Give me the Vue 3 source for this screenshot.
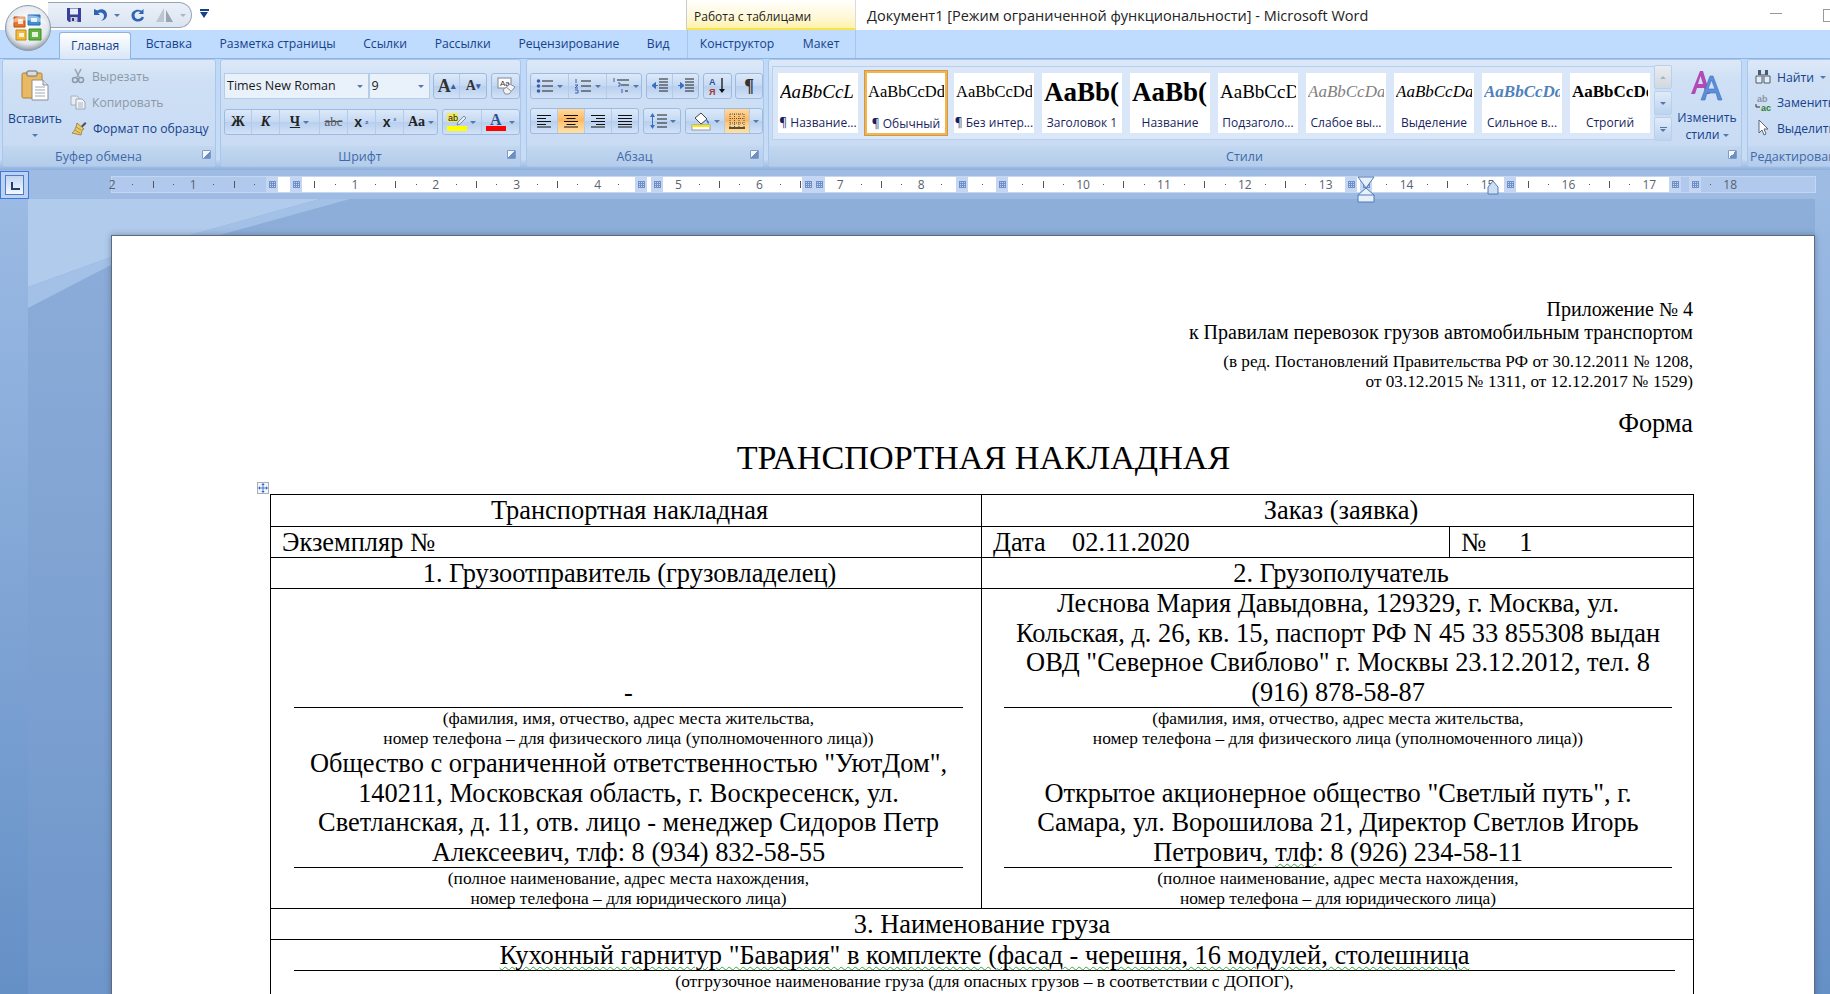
<template>
  <div class="okno">
    <!-- заголовок окна -->
    <div class="zagolovok">
      <div class="qat">
        <svg class="qat-ico" width="16" height="16" viewBox="0 0 16 16"><path d="M1 1h14v14H3l-2-2z" fill="#3a3f9e"/><rect x="4" y="1.500" width="8" height="6" fill="#e8edf7"/><rect x="4.500" y="10" width="7" height="5" fill="#c9ccd8"/><rect x="6" y="11" width="2" height="3" fill="#34386f"/></svg>
        <svg class="qat-ico undo" width="15" height="16" viewBox="0 0 15 16"><path d="M1 2v6h6L5 6c3-1.500 6 0 6 3 0 2-1 3.500-3 5 4-1 6-3 6-6 0-5-5-7.500-9.500-4.500z" fill="#2f64b5"/></svg>
        <span class="strelka s-qat"></span>
        <svg class="qat-ico redo" width="16" height="16" viewBox="0 0 16 16"><path d="M13.500 2v5h-5l2-2c-2.500-1.500-6 0-6 3.200 0 2 1.500 3.800 3.500 3.800s3.200-1 3.800-2.500l2.200 1c-.8 2.500-3 4-6 4C4 14.500 1.500 12 1.500 8.200 1.500 3.500 7.500 1 11.500 3.800z" fill="#2f64b5"/></svg>
        <svg class="qat-ico seryj" width="19" height="16" viewBox="0 0 19 16"><path d="M9 1v14H1z" fill="#bcc6d0"/><path d="M11 3l7 12h-7z" fill="#98a4b2"/></svg>
        <span class="strelka s-qat seraya"></span>
      </div>
      <div class="nastroit"><span></span></div>
      <div class="rabota">Работа с таблицами</div>
      <div class="nazvanie">Документ1 [Режим ограниченной функциональности] - Microsoft Word</div>
      <div class="knopki-okna"><span class="svernut"></span><span class="razvernut"></span></div>
    </div>

    <div class="orb">
      <svg width="46" height="46" viewBox="0 0 46 46">
        <defs>
          <radialGradient id="orbFon" cx="50%" cy="40%" r="60%">
            <stop offset="0" stop-color="#ffffff"/>
            <stop offset="0.75" stop-color="#e3e8ee"/>
            <stop offset="1" stop-color="#8f9aa6"/>
          </radialGradient>
        </defs>
        <circle cx="23" cy="23" r="22.500" fill="url(#orbFon)" stroke="#8d99a6"/>
        <path d="M9 12h11v10H9z" fill="#e8742c" stroke="#b34f12"/>
        <path d="M13 14h5v5h-5z" fill="#f8e3d2"/>
        <path d="M23 10h12v10H23z" fill="#3d8fd6" stroke="#246bb0"/>
        <path d="M26 13h6v4h-6z" fill="#dcebf7"/>
        <path d="M11 25h10v10H11z" fill="#f4b83a" stroke="#c48a14"/>
        <path d="M14 28h5v4h-5z" fill="#fff3d4"/>
        <path d="M24 24h12v11H24z" fill="#63b043" stroke="#3f8a24"/>
        <path d="M27 27h6v5h-6z" fill="#e4f2da"/>
        <path d="M4 20C8 7 38 7 42 20 34 14 12 14 4 20z" fill="#ffffff" opacity=".45"/>
      </svg>
    </div>

    <!-- вкладки -->
    <div class="vkladki">
      <div v-for="t in vkladki" :key="t" class="vkladka" :class="{ aktivnaya: t === 'Главная' }">{{ t }}</div>
      <div class="kontekst">
        <div class="vkladka">Конструктор</div>
        <div class="vkladka">Макет</div>
      </div>
    </div>

    <!-- лента -->
    <div class="lenta">
      <section class="gruppa g-bufer">
        <div class="telo stroka-telo">
          <div class="vstavit">
            <svg width="28" height="31" viewBox="0 0 28 31">
              <rect x="1" y="3" width="20" height="25" rx="1.500" fill="#e9b964" stroke="#a97f38"/>
              <rect x="6" y="1" width="10" height="5" rx="1" fill="#d8dde4" stroke="#75716a"/>
              <path d="M11 10h11l5 5v15H11z" fill="#fff" stroke="#8a8d96"/>
              <path d="M22 10v5h5" fill="#dbe2ec" stroke="#8a8d96"/>
              <path d="M14 17h10M14 20h10M14 23h10M14 26h10" stroke="#9fa7b5"/>
            </svg>
            <span class="tekst">Вставить</span>
            <span class="strelka"></span>
          </div>
          <div class="kolonka">
            <div class="malaya seryj-tekst">
              <svg width="16" height="16" viewBox="0 0 16 16"><path d="M5 1l4 8M11 1L7 9" stroke="#9aa6b5" stroke-width="1.600" fill="none"/><circle cx="5" cy="12" r="2.500" fill="none" stroke="#8d99a8" stroke-width="1.500"/><circle cx="11" cy="12" r="2.500" fill="none" stroke="#8d99a8" stroke-width="1.500"/></svg>
              Вырезать
            </div>
            <div class="malaya seryj-tekst">
              <svg width="16" height="16" viewBox="0 0 16 16"><path d="M1 2h6l2 2v7H1z" fill="#e8edf3" stroke="#a6b0bd"/><path d="M6 5h6l3 3v7H6z" fill="#f2f5f9" stroke="#99a4b3"/><path d="M8 9h5M8 11h5M8 13h5" stroke="#aab3c0"/></svg>
              Копировать
            </div>
            <div class="malaya">
              <svg width="17" height="16" viewBox="0 0 17 16"><path d="M11 6l4-4 1.500 1.500-4 4z" fill="#55504a"/><path d="M7 3l7 6-2 1-1 5-9-2C4 12 6 8 7 3z" fill="#e9c96a" stroke="#93772c" stroke-width=".8"/><path d="M6 7l5 3M5 10l5 3" stroke="#b3933c"/></svg>
              Формат по образцу
            </div>
          </div>
        </div>
        <div class="podpis">Буфер обмена<i class="raskryt"></i></div>
      </section>

      <section class="gruppa g-shrift">
        <div class="telo">
          <div class="ryad">
            <div class="pole p-shrift">Times New Roman<span class="strelka"></span></div>
            <div class="pole p-razmer">9<span class="strelka"></span></div>
            <div class="nabor ml3">
              <div class="kn w26 bukva-a">A<sup>▴</sup></div>
              <div class="kn w26 bukva-a mensh">A<sup>▾</sup></div>
            </div>
            <div class="nabor ml4">
              <div class="kn w27">
                <svg width="20" height="18" viewBox="0 0 20 18"><rect x="2" y="1" width="13" height="10" fill="#fff" stroke="#7f8896"/><text x="4" y="9" font-size="8" font-family="Liberation Sans, sans-serif" fill="#333">Aa</text><path d="M7 13l7-6 5 3-6 7H9z" fill="#f3f3f6" stroke="#8b8f99"/><path d="M10 10l5 4" stroke="#8b8f99"/></svg>
              </div>
            </div>
          </div>
          <div class="ryad">
            <div class="nabor">
              <div class="kn w27 ser">Ж</div>
              <div class="kn w28 ser kursiv">К</div>
              <div class="kn w40 ser"><u>Ч</u><span class="strelka"></span></div>
              <div class="kn w28 ser zachyork">abc</div>
              <div class="kn w28 ser indeks">x<sub>₂</sub></div>
              <div class="kn w28 ser indeks">x<sup>²</sup></div>
              <div class="kn w34 ser registr">Aa<span class="strelka"></span></div>
            </div>
            <div class="nabor ml4">
              <div class="kn w39">
                <svg width="20" height="20" viewBox="0 0 20 20"><rect x="0" y="1" width="11" height="9" fill="#f3e85a"/><text x="1" y="9" font-size="9" font-family="Liberation Sans, sans-serif" fill="#222">ab</text><path d="M11 10l6-6 2 2-6 6-3 1z" fill="#e8edf4" stroke="#7f8896"/><rect x="0" y="14" width="20" height="5" fill="#ffff00"/></svg>
                <span class="strelka"></span>
              </div>
              <div class="kn w38">
                <svg width="20" height="20" viewBox="0 0 20 20"><text x="4" y="13" font-size="16" font-weight="bold" font-family="Liberation Serif, serif" fill="#2f4f8e">A</text><rect x="0" y="14" width="20" height="5" fill="#ff0000"/></svg>
                <span class="strelka"></span>
              </div>
            </div>
          </div>
        </div>
        <div class="podpis">Шрифт<i class="raskryt"></i></div>
      </section>

      <section class="gruppa g-abzac">
        <div class="telo">
          <div class="ryad">
            <div class="nabor">
              <div class="kn w38">
                <svg width="18" height="16" viewBox="0 0 18 16"><path d="M6 3h11M6 8h11M6 13h11" stroke="#222" stroke-width="1.200"/><circle cx="2.500" cy="3" r="1.800" fill="#3a5fa8"/><circle cx="2.500" cy="8" r="1.800" fill="#3a5fa8"/><circle cx="2.500" cy="13" r="1.800" fill="#3a5fa8"/></svg>
                <span class="strelka"></span>
              </div>
              <div class="kn w38">
                <svg width="18" height="16" viewBox="0 0 18 16"><path d="M7 3h10M7 8h10M7 13h10" stroke="#222" stroke-width="1.200"/><path d="M2 1v4M1 7h3L1 10h3M1 12h3v3H1" stroke="#3a5fa8" fill="none"/></svg>
                <span class="strelka"></span>
              </div>
              <div class="kn w37">
                <svg width="18" height="16" viewBox="0 0 18 16"><path d="M5 2h12M9 7h8M13 13h3" stroke="#222" stroke-width="1.200"/><path d="M2 0v4M6 5h2v3H6M10 11v4" stroke="#3a5fa8" fill="none"/></svg>
                <span class="strelka"></span>
              </div>
            </div>
            <div class="nabor ml4">
              <div class="kn w26">
                <svg width="18" height="16" viewBox="0 0 18 16"><path d="M8 1h9M8 4h9M8 7h9M8 10h9M8 13h9" stroke="#222"/><path d="M7 7.500H3M1 7.500l3.500-3v6z" fill="#3a6fc0" stroke="#3a6fc0"/></svg>
              </div>
              <div class="kn w26">
                <svg width="18" height="16" viewBox="0 0 18 16"><path d="M8 1h9M8 4h9M8 7h9M8 10h9M8 13h9" stroke="#222"/><path d="M1 7.500h4M7 7.500l-3.500-3v6z" fill="#3a6fc0" stroke="#3a6fc0"/></svg>
              </div>
            </div>
            <div class="nabor ml4">
              <div class="kn w27">
                <svg width="18" height="20" viewBox="0 0 18 20"><text x="0" y="9" font-size="9" font-weight="bold" font-family="Liberation Sans, sans-serif" fill="#2f5597">A</text><text x="0" y="19" font-size="9" font-weight="bold" font-family="Liberation Sans, sans-serif" fill="#a33">Я</text><path d="M13 2v14" stroke="#111" stroke-width="1.300"/><path d="M10 13h6l-3 4z" fill="#111"/></svg>
              </div>
            </div>
            <div class="nabor ml3">
              <div class="kn w27 ser pilkrou">¶</div>
            </div>
          </div>
          <div class="ryad r2">
            <div class="nabor">
              <div class="kn w27"><svg width="16" height="14" viewBox="0 0 16 14"><path d="M1 1.500h14M1 4.500h9M1 7.500h14M1 10.500h9M1 13h14" stroke="#111"/></svg></div>
              <div class="kn w27 vkl"><svg width="16" height="14" viewBox="0 0 16 14"><path d="M1 1.500h14M3.500 4.500h9M1 7.500h14M3.500 10.500h9M1 13h14" stroke="#111"/></svg></div>
              <div class="kn w27"><svg width="16" height="14" viewBox="0 0 16 14"><path d="M1 1.500h14M6 4.500h9M1 7.500h14M6 10.500h9M1 13h14" stroke="#111"/></svg></div>
              <div class="kn w26"><svg width="16" height="14" viewBox="0 0 16 14"><path d="M1 1.500h14M1 4.500h14M1 7.500h14M1 10.500h14M1 13h14" stroke="#111"/></svg></div>
            </div>
            <div class="nabor ml4">
              <div class="kn w37">
                <svg width="18" height="18" viewBox="0 0 18 18"><path d="M8 3h10M8 7h10M8 11h10M8 15h10" stroke="#222" stroke-width="1.100"/><path d="M3.500 3v12" stroke="#3a6fc0"/><path d="M1 5l2.500-4L6 5zM1 13l2.500 4L6 13z" fill="#3a6fc0"/></svg>
                <span class="strelka"></span>
              </div>
            </div>
            <div class="nabor ml4">
              <div class="kn w39">
                <svg width="20" height="20" viewBox="0 0 20 20"><path d="M4 7l6-5 6 6-6 5z" fill="#fff" stroke="#444"/><path d="M15 8c2 1 3 3 3 4s-1 1-1.500 0-1-2-1.500-4z" fill="#3a6fc0"/><rect x="1" y="14" width="18" height="5" fill="#fff" stroke="#999"/><rect x="1" y="14" width="18" height="2" fill="#ffe600"/></svg>
                <span class="strelka"></span>
              </div>
              <div class="kn w25 vkl">
                <svg width="16" height="16" viewBox="0 0 16 16"><path d="M1 1h14M1 5.500h14M1 10h14M1 1v13M5.500 1v13M10 1v13M15 1v13" stroke="#555" stroke-dasharray="1 1"/><path d="M0 15h16" stroke="#222" stroke-width="1.500"/></svg>
              </div>
              <div class="kn w12"><span class="strelka"></span></div>
            </div>
          </div>
        </div>
        <div class="podpis">Абзац<i class="raskryt"></i></div>
      </section>

      <section class="gruppa g-stili">
        <div class="telo stroka-telo">
          <div class="galereya">
            <div class="spisok">
              <div v-for="s in stili" :key="s.imya" class="stil" :class="{ vybran: s.vybran }">
                <div class="obrazec" :class="s.klass">{{ s.obrazec }}</div>
                <div class="imya">{{ s.imya }}</div>
              </div>
            </div>
            <div class="prokrutka">
              <div class="pr-kn pr-seraya"><span class="strelka vverh"></span></div>
              <div class="pr-kn"><span class="strelka"></span></div>
              <div class="pr-kn pr-nizh"><span class="cherta"></span><span class="strelka"></span></div>
            </div>
          </div>
          <div class="izmenit">
            <svg width="34" height="32" viewBox="0 0 34 32">
              <path d="M1 25L10 2h3l7 23h-4l-2-6H7l-2 6zM8 15h5l-2.500-8z" fill="#b14ab5"/>
              <path d="M11 31L20 7h3l9 24h-4l-2-7h-9l-2 7zM18 20h7l-3.500-9z" fill="#5b8fd8" stroke="#3a6fc0" stroke-width=".6"/>
            </svg>
            <span class="tekst">Изменить</span>
            <span class="tekst">стили <span class="strelka"></span></span>
          </div>
        </div>
        <div class="podpis">Стили<i class="raskryt"></i></div>
      </section>

      <section class="gruppa g-red">
        <div class="telo">
          <div class="kolonka k-red">
            <div class="malaya">
              <svg width="16" height="16" viewBox="0 0 16 16"><path d="M3 1h3v5H3zM10 1h3v5h-3z" fill="#4d5a6e"/><path d="M1 7h6v7H1zM9 7h6v7H9z" fill="#e8edf3" stroke="#4d5a6e"/><path d="M6 5h4v3H6z" fill="#8794a8"/></svg>
              Найти <span class="strelka"></span>
            </div>
            <div class="malaya">
              <svg width="16" height="18" viewBox="0 0 16 18"><text x="2" y="8" font-size="9" font-weight="bold" font-family="Liberation Sans, sans-serif" fill="#8a94a2">ab</text><text x="6" y="17" font-size="9" font-weight="bold" font-family="Liberation Sans, sans-serif" fill="#2e7d32">ac</text><path d="M1 10v3h4" stroke="#333" fill="none"/></svg>
              Заменить
            </div>
            <div class="malaya">
              <svg width="16" height="18" viewBox="0 0 16 18"><path d="M4 1v13l3-3 2 5 2-1-2-5h4z" fill="#fff" stroke="#5b6675"/></svg>
              Выделить
            </div>
          </div>
        </div>
        <div class="podpis podpis-red">Редактирование</div>
      </section>
    </div>

    <!-- линейка и документ -->
    <div class="rabochee">
      <svg class="fon" width="1830" height="824" viewBox="0 0 1830 824">
        <defs>
          <linearGradient id="fonNiz" x1="0" y1="0" x2="0" y2="1">
            <stop offset="0" stop-color="#8fafda"/>
            <stop offset="1" stop-color="#6f96ca"/>
          </linearGradient>
          <linearGradient id="fonKraj" x1="0" y1="0" x2="0" y2="1">
            <stop offset="0" stop-color="#9dbce5"/>
            <stop offset="1" stop-color="#6590c6"/>
          </linearGradient>
        </defs>
        <rect width="1830" height="824" fill="url(#fonNiz)"/>
        <path d="M28 29H320L111 87 28 117z" fill="#b0cbec"/>
        <path d="M28 117L111 87 320 29H350L111 95 28 138z" fill="#a3c0e6"/>
        <rect width="28" height="824" fill="url(#fonKraj)"/>
        <rect x="1815" width="15" height="824" fill="url(#fonKraj)"/>
        <rect width="1830" height="29" fill="#9dbbe3"/>
      </svg>

      <div class="ryad-lineyki">
        <div class="ugol"><span></span></div>
        <div class="lineyka">
          <div class="bel"></div>
          <span v-for="n in chisla" :key="n.x" class="chislo" :style="{ left: n.x + 'px' }">{{ n.t }}</span>
          <i v-for="x in shtrihi" :key="x" class="shtrih" :style="{ left: x + 'px' }"></i>
          <i v-for="x in tochki" :key="'t' + x" class="tochka" :style="{ left: x + 'px' }"></i>
          <i v-for="x in metki" :key="'m' + x" class="metka" :style="{ left: x + 'px' }"></i>
          <svg class="otstup" width="18" height="27" viewBox="0 0 18 27"><path d="M1 1h16L9 12zM1 26h16V19L9 12 1 19z" fill="#eaf0f9" stroke="#4f7bb8"/><path d="M1 19h16" stroke="#4f7bb8"/></svg>
          <svg class="otstup2" width="12" height="15" viewBox="0 0 12 15"><path d="M1 14V7l5-6 5 6v7z" fill="#cfdff3" stroke="#4f7bb8"/></svg>
        </div>
      </div>

      <div class="stranica">
        <p class="pril">Приложение № 4</p>
        <p class="pril">к Правилам перевозок грузов автомобильным транспортом</p>
        <p class="red red1">(в ред. Постановлений Правительства РФ от 30.12.2011 № 1208,</p>
        <p class="red">от 03.12.2015 № 1311, от 12.12.2017 № 1529)</p>
        <p class="forma">Форма</p>
        <h1 class="titul">ТРАНСПОРТНАЯ НАКЛАДНАЯ</h1>

        <div class="tabl-obertka">
          <div class="peremestit">
            <svg width="12" height="12" viewBox="0 0 12 12"><path d="M6 1v10M1 6h10" stroke="#2f64c8"/><path d="M6 0l2 2.500H4zM6 12l2-2.500H4zM0 6l2.500-2v4zM12 6L9.500 4v4z" fill="#2f64c8"/></svg>
          </div>
          <table class="nakladnaya">
            <colgroup><col class="c1"><col class="c2"><col class="c3"></colgroup>
            <tbody>
              <tr class="h32"><td class="sdvig">Транспортная накладная</td><td class="sdvig" colspan="2">Заказ (заявка)</td></tr>
              <tr class="h31">
                <td class="vlevo">Экземпляр №</td>
                <td class="vlevo">Дата&nbsp;&nbsp;&nbsp;&nbsp;02.11.2020</td>
                <td class="vlevo">№&nbsp;&nbsp;&nbsp;&nbsp;&nbsp;1</td>
              </tr>
              <tr class="h31"><td class="sdvig">1. Грузоотправитель (грузовладелец)</td><td class="sdvig" colspan="2">2. Грузополучатель</td></tr>
              <tr>
                <td class="yacheika">
                  <div class="pole-vvoda p119"><div>-</div></div>
                  <div class="melko">(фамилия, имя, отчество, адрес места жительства,<br>номер телефона – для физического лица (уполномоченного лица))</div>
                  <div class="pole-vvoda p120"><div>Общество с ограниченной ответственностью "УютДом", 140211, Московская область, г. Воскресенск, ул. Светланская, д. 11, отв. лицо - менеджер Сидоров Петр Алексеевич, тлф: 8 (934) 832-58-55</div></div>
                  <div class="melko">(полное наименование, адрес места нахождения,<br>номер телефона – для юридического лица)</div>
                </td>
                <td class="yacheika pravaya" colspan="2">
                  <div class="pole-vvoda p119"><div>Леснова Мария Давыдовна, 129329, г. Москва, ул. Кольская, д. 26, кв. 15, паспорт РФ N 45 33 855308 выдан ОВД "Северное Свиблово" г. Москвы 23.12.2012, тел. 8 (916) 878-58-87</div></div>
                  <div class="melko">(фамилия, имя, отчество, адрес места жительства,<br>номер телефона – для физического лица (уполномоченного лица))</div>
                  <div class="pole-vvoda p120"><div>Открытое акционерное общество "Светлый путь", г. Самара, ул. Ворошилова 21, Директор Светлов Игорь Петрович, <span class="volna">тлф</span>: 8 (926) 234-58-11</div></div>
                  <div class="melko">(полное наименование, адрес места нахождения,<br>номер телефона – для юридического лица)</div>
                </td>
              </tr>
              <tr class="h31"><td colspan="3">3. Наименование груза</td></tr>
              <tr>
                <td colspan="3" class="yacheika niz">
                  <div class="pole-vvoda p31"><span class="volna">Кухонный гарнитур "Бавария" в комплекте (фасад - черешня, 16 модулей, столешница</span></div>
                  <div class="melko">(отгрузочное наименование груза (для опасных грузов – в соответствии с ДОПОГ),</div>
                </td>
              </tr>
            </tbody>
          </table>
        </div>
      </div>
    </div>
  </div>
</template>

<script setup>
const vkladki = ['Главная', 'Вставка', 'Разметка страницы', 'Ссылки', 'Рассылки', 'Рецензирование', 'Вид']

const stili = [
  { imya: '¶ Название...', obrazec: 'AaBbCcL', klass: 'o-nazv' },
  { imya: '¶ Обычный', obrazec: 'AaBbCcDd', klass: 'o-obych', vybran: true },
  { imya: '¶ Без интер...', obrazec: 'AaBbCcDd', klass: 'o-obych' },
  { imya: 'Заголовок 1', obrazec: 'AaBb(', klass: 'o-zag' },
  { imya: 'Название', obrazec: 'AaBb(', klass: 'o-zag' },
  { imya: 'Подзаголо...', obrazec: 'AaBbCcD', klass: 'o-podz' },
  { imya: 'Слабое вы...', obrazec: 'AaBbCcDa', klass: 'o-slab' },
  { imya: 'Выделение', obrazec: 'AaBbCcDa', klass: 'o-vyd' },
  { imya: 'Сильное в...', obrazec: 'AaBbCcDd', klass: 'o-siln' },
  { imya: 'Строгий', obrazec: 'AaBbCcDd', klass: 'o-strog' }
]

// линейка: 1 см = 80.9 px, ноль на 273 - 111 = 162 px от начала линейки
const shag = 80.9
const nol = 162
const chisla = []
for (let i = -2; i <= 18; i++) {
  if (i === 0 || i === 9) continue
  chisla.push({ t: Math.abs(i), x: nol + i * shag })
}
const shtrihi = []
const tochki = []
for (let i = -2; i < 18; i++) {
  shtrihi.push(nol + (i + 0.5) * shag)
  tochki.push(nol + (i + 0.25) * shag, nol + (i + 0.75) * shag)
}
const metki = [159, 183, 528, 544, 695, 706, 849, 889, 1238, 1253, 1397, 1562, 1582]
</script>

<style scoped>
.okno {
  position: relative;
  width: 1830px;
  height: 994px;
  overflow: hidden;
  display: flex;
  flex-direction: column;
  font-family: "Open Sans", "Noto Sans", sans-serif;
  font-size: 12.200px;
  color: #15428b;
  background: #9dbbe3;
}

/* заголовок */
.zagolovok {
  height: 30px;
  flex: none;
  background: #fff;
  display: flex;
  align-items: flex-start;
  position: relative;
}

.qat {
  margin: 2px 0 0 48px;
  width: 144px;
  height: 26px;
  box-sizing: border-box;
  border: 1px solid #98a4b4;
  border-left: none;
  border-radius: 0 14px 14px 0;
  background: linear-gradient(#eaf0f8, #dbe5f2);
  display: flex;
  align-items: center;
  padding-left: 18px;
}

.qat-ico.undo { margin-left: 11px; }
.qat-ico.redo { margin-left: 10px; }
.qat-ico.seryj { margin-left: 9px; }
.s-qat { margin-left: 6px; }

.nastroit {
  margin: 9px 0 0 8px;
  width: 9px;
}

.nastroit span {
  display: block;
  border-top: 2px solid #15428b;
  padding-top: 1px;
}

.nastroit span::after {
  content: "";
  display: block;
  width: 0;
  border-left: 4px solid transparent;
  border-right: 4px solid transparent;
  border-top: 6px solid #15428b;
}

.rabota {
  margin-left: 477px;
  width: 170px;
  height: 30px;
  box-sizing: border-box;
  padding: 9px 0 0 7px;
  background: linear-gradient(#ffffff, #fff7d0 70%, #fff2a8);
  border-bottom: 2px solid #f8e34a;
  border-left: 1px solid #c8ccd0;
  border-right: 1px solid #d8dce0;
  color: #222;
  font-size: 12px;
  line-height: 16px;
}

.nazvanie {
  margin: 7px 0 0 11px;
  color: #222;
  font-size: 14.500px;
  line-height: 18px;
  white-space: nowrap;
}

.knopki-okna {
  position: absolute;
  right: 0;
  top: 0;
  width: 70px;
  height: 30px;
}

.svernut {
  position: absolute;
  left: 10px;
  top: 13px;
  width: 12px;
  border-top: 1px solid #999;
}

.razvernut {
  position: absolute;
  left: 63px;
  top: 9px;
  width: 12px;
  height: 11px;
  border: 1px solid #999;
}

.orb {
  position: absolute;
  left: 5px;
  top: 5px;
  width: 46px;
  height: 46px;
  z-index: 3;
}

/* вкладки */
.vkladki {
  height: 29px;
  flex: none;
  display: flex;
  align-items: flex-end;
  background: #bfdbfd;
  padding-left: 56px;
  border-bottom: 1px solid #8db2e3;
  box-sizing: border-box;
}

.vkladka {
  height: 27px;
  padding: 0 14.300px;
  line-height: 25px;
  white-space: nowrap;
  margin-left: -1px;
}

.aktivnaya {
  margin-left: 3px;
  padding: 0 11px;
  margin-right: 1px;
  box-sizing: border-box;
  border: 1px solid #8db2e3;
  border-bottom: none;
  border-radius: 3px 3px 0 0;
  background: linear-gradient(#ffffff, #d8e6f7);
  position: relative;
  top: 1px;
}

.kontekst {
  display: flex;
  margin-left: 3px;
  border-left: 1px solid #a9c4e8;
  border-right: 1px solid #a9c4e8;
  height: 29px;
  align-items: flex-end;
  padding-right: 1px;
}

.kontekst .vkladka:first-child {
  padding-left: 13px;
}

.kontekst .vkladka:last-child {
  margin-left: 0;
}

/* лента */
.lenta {
  height: 111px;
  flex: none;
  box-sizing: border-box;
  display: flex;
  gap: 4px;
  padding: 0 0 0 2px;
  background: linear-gradient(#bfd9f8, #c8dcf5 90%, #8fb0dc);
  overflow: hidden;
}

.gruppa {
  height: 108px;
  box-sizing: border-box;
  border: 1px solid #a9c6ec;
  border-radius: 3px;
  display: flex;
  flex-direction: column;
  flex: none;
  background: linear-gradient(#dde9f8, #cfe0f5 18%, #c6daf3);
  overflow: hidden;
}

.g-bufer { width: 214px; }
.g-shrift { width: 301px; }
.g-abzac { width: 238px; margin-left: 1px; }
.g-stili { width: 974px; }
.g-red { width: 90px; margin-left: 1px; }

.telo {
  height: 86px;
  flex: none;
  box-sizing: border-box;
}

.stroka-telo {
  display: flex;
}

.podpis {
  flex: 1;
  display: flex;
  align-items: center;
  justify-content: center;
  padding-right: 21px;
  position: relative;
  background: linear-gradient(#c2d7f0, #b4cdea);
  color: #3e6aaa;
  font-size: 12.500px;
}

.podpis-red {
  justify-content: flex-start;
  padding-left: 2px;
  padding-right: 0;
  white-space: nowrap;
}

.raskryt {
  position: absolute;
  right: 4px;
  top: 4px;
  width: 9px;
  height: 9px;
  border: 1px solid #7e9cc6;
  border-radius: 1px;
  box-sizing: border-box;
  background: linear-gradient(135deg, #f4f8fd 50%, #6b8fc4 50%);
}

.strelka {
  display: inline-block;
  width: 0;
  height: 0;
  border-left: 3px solid transparent;
  border-right: 3px solid transparent;
  border-top: 3px solid #5578ab;
  vertical-align: middle;
}

.strelka.seraya { border-top-color: #a9b4c2; }

.strelka.vverh {
  border-top: none;
  border-bottom: 3px solid #a9b4c2;
}

.tekst {
  white-space: nowrap;
  line-height: 17px;
}

.vstavit {
  width: 58px;
  margin-left: 3px;
  display: flex;
  flex-direction: column;
  align-items: center;
  padding-top: 10px;
}

.vstavit .tekst {
  margin-top: 9px;
}

.vstavit .strelka {
  margin-top: 7px;
}

.kolonka {
  display: flex;
  flex-direction: column;
  gap: 4px;
  padding-top: 5px;
  margin-left: 6px;
}

.malaya {
  display: flex;
  align-items: center;
  gap: 6px;
  height: 22px;
  white-space: nowrap;
}

.seryj-tekst { color: #8c98a8; }

.k-red {
  padding-top: 6px;
  margin-left: 7px;
  gap: 3.500px;
}

/* шрифт и абзац */
.ryad {
  display: flex;
  padding: 13px 0 0 3px;
}

.ryad + .ryad {
  padding-top: 10px;
}

.ryad.r2 {
  padding-top: 9px;
}

.pole {
  height: 26px;
  box-sizing: border-box;
  background: #e9f1fb;
  border: 1px solid #b5cdea;
  color: #1a1a1a;
  font-size: 12.500px;
  line-height: 24px;
  padding-left: 2px;
  display: flex;
  justify-content: space-between;
  align-items: center;
  padding-right: 5px;
}

.p-shrift { width: 145px; }
.p-razmer { width: 62px; }

.nabor {
  display: flex;
  height: 26px;
  box-sizing: border-box;
  border: 1px solid #9dbbe0;
  border-radius: 3px;
  background: linear-gradient(#dce9f9, #c5d9f3 50%, #b8cfee 52%, #d2e2f7);
  overflow: hidden;
}

.ml3 { margin-left: 3px; }
.ml4 { margin-left: 4px; }

.kn {
  display: flex;
  align-items: center;
  justify-content: center;
  gap: 3px;
  height: 100%;
  color: #222;
  border-right: 1px solid #b4cbe8;
  box-sizing: border-box;
  flex: none;
}

.kn:last-child { border-right: none; }

.w12 { width: 12px; }
.w25 { width: 25px; }
.w26 { width: 26px; }
.w27 { width: 27px; }
.w28 { width: 28px; }
.w34 { width: 34px; }
.w37 { width: 37px; }
.w38 { width: 38px; }
.w39 { width: 39px; }
.w40 { width: 40px; }

.ser {
  font-family: "Liberation Serif", serif;
  font-weight: bold;
  font-size: 14px;
}

.kursiv { font-style: italic; }

.zachyork {
  text-decoration: line-through;
  font-weight: normal;
  color: #555;
  font-size: 13px;
}

.indeks { font-family: "Liberation Sans", sans-serif; }

.indeks sub, .indeks sup {
  font-size: 8px;
  color: #3a5fa8;
  line-height: 0;
}

.registr { font-size: 14px; }

.bukva-a {
  font-family: "Liberation Serif", serif;
  font-weight: bold;
  font-size: 18px;
  gap: 0;
  color: #333;
}

.bukva-a sup {
  font-size: 9px;
  color: #3a5fa8;
  line-height: 0;
}

.mensh { font-size: 14px; }

.pilkrou { font-size: 18px; color: #333; }

.vkl {
  background: linear-gradient(#ffd9a0, #fdb55b 50%, #fdc778 55%, #ffe0a6);
}

/* стили */
.galereya {
  display: flex;
  height: 75px;
  margin: 6px 0 0 3px;
}

.spisok {
  width: 882px;
  box-sizing: border-box;
  display: flex;
  align-items: center;
  gap: 8px;
  padding-left: 5px;
  background: #d9e7f8;
  border: 1px solid #b9d0ec;
  border-right: none;
  height: 74px;
}

.stil {
  width: 80px;
  height: 60px;
  flex: none;
  background: #fff;
  overflow: hidden;
  display: flex;
  flex-direction: column;
  align-items: center;
  color: #1a1f5e;
}

.stil.vybran {
  width: 84px;
  height: 66px;
  margin: 0 -2px;
  border: 3px solid #f6b54c;
  outline: 1px solid #c99a4f;
  outline-offset: -1px;
  box-sizing: border-box;
  position: relative;
  z-index: 1;
}

.obrazec {
  height: 40px;
  width: 76px;
  line-height: 36px;
  margin-top: 1px;
  color: #000;
  font-family: "Liberation Serif", serif;
  font-size: 16.500px;
  white-space: nowrap;
  overflow: hidden;
  text-align: left;
}

.vybran .obrazec {
  margin-top: 0;
  height: 42px;
  line-height: 38px;
}

.o-nazv { font-style: italic; font-size: 19px; }
.o-zag { font-weight: bold; font-size: 27px; }
.o-podz { font-size: 19px; }
.o-slab { font-style: italic; color: #808080; font-size: 17px; }
.o-vyd { font-style: italic; font-size: 17px; }
.o-siln { font-style: italic; font-weight: bold; color: #4f81bd; font-size: 17px; }
.o-strog { font-weight: bold; font-size: 17px; }

.imya {
  font-size: 12px;
  line-height: 17px;
  white-space: nowrap;
  letter-spacing: 0;
}

.prokrutka {
  width: 18px;
  display: flex;
  flex-direction: column;
  gap: 2px;
  margin-top: -1px;
}

.pr-kn {
  flex: 1;
  border: 1px solid #b9d0ec;
  border-radius: 2px;
  background: linear-gradient(#e0ebf9, #bdd3ef);
  display: flex;
  flex-direction: column;
  align-items: center;
  justify-content: center;
  gap: 1px;
}

.pr-seraya { background: linear-gradient(#e9edf2, #d2d8df); }

.cherta {
  width: 7px;
  border-top: 1px solid #5578ab;
}

.izmenit {
  width: 68px;
  margin-left: 1px;
  display: flex;
  flex-direction: column;
  align-items: center;
  padding-top: 9px;
}

.izmenit svg { margin-bottom: 8px; }

/* линейка */
.rabochee {
  position: relative;
  flex: 1;
  min-height: 0;
  background: #9dbbe3;
}

.fon {
  position: absolute;
  left: 0;
  top: 0;
}

.ryad-lineyki {
  position: relative;
  height: 29px;
  display: flex;
  align-items: flex-start;
}

.ugol {
  width: 29px;
  height: 28px;
  margin-top: 1px;
  box-sizing: border-box;
  border: 1px solid #3f78d8;
  background: #bcd2f0;
  padding: 3px 4px;
}

.ugol span {
  display: block;
  height: 20px;
  box-sizing: border-box;
  border: 1px solid #4a7cd0;
  background: linear-gradient(#c2d6f0, #f4f8fd);
  position: relative;
}

.ugol span::after {
  content: "";
  position: absolute;
  left: 5px;
  top: 6px;
  width: 7px;
  height: 6px;
  border-left: 2px solid #1f3f73;
  border-bottom: 2px solid #1f3f73;
}

.lineyka {
  position: relative;
  margin: 6px 0 0 82px;
  width: 1705px;
  height: 17px;
  box-sizing: border-box;
  border: 1px solid #c3d7f0;
  background: #b1c9ec;
}

.bel {
  position: absolute;
  left: 162px;
  top: 0;
  bottom: 0;
  width: 1404px;
  background: #fff;
}

.chislo {
  position: absolute;
  top: 0;
  width: 16px;
  margin-left: -8px;
  text-align: center;
  font-size: 12px;
  line-height: 15px;
  color: #5a6270;
}

.shtrih {
  position: absolute;
  top: 4px;
  height: 7px;
  border-left: 1px solid #555;
}

.tochka {
  position: absolute;
  top: 7px;
  width: 1px;
  height: 1px;
  background: #555;
}

.metka {
  position: absolute;
  top: 0;
  bottom: 0;
  width: 12px;
  margin-left: -5px;
  background:
    repeating-linear-gradient(90deg, #6e8fc8 0 1px, transparent 1px 2px) 3px 4px / 7px 7px no-repeat,
    repeating-linear-gradient(0deg, #6e8fc8 0 1px, transparent 1px 2px) 3px 4px / 7px 7px no-repeat,
    #c4d6f1;
}

.otstup {
  position: absolute;
  left: 1245px;
  top: -1px;
}

.otstup2 {
  position: absolute;
  left: 1375px;
  top: 3px;
}

/* страница */
.stranica {
  position: relative;
  margin: 36px 0 0 111px;
  width: 1704px;
  height: 800px;
  box-sizing: border-box;
  padding: 62px 121px 0 158px;
  background: #fff;
  border: 1px solid #5f6b7c;
  border-bottom: none;
  box-shadow: 0 0 6px rgba(50, 70, 100, .45);
  font-family: "Liberation Serif", "Times New Roman", serif;
  color: #000;
}

.stranica p, .stranica h1 {
  margin: 0;
  text-align: right;
}

.pril {
  font-size: 20px;
  line-height: 23px;
  white-space: nowrap;
}

.red {
  font-size: 17.200px;
  line-height: 20px;
  white-space: nowrap;
}

.red1 { padding-top: 8px; }

.forma {
  font-size: 26.300px;
  line-height: 28px;
  padding-top: 18px;
}

.stranica .titul {
  text-align: center;
  font-weight: normal;
  font-size: 34.200px;
  line-height: 40px;
  margin-bottom: 16px;
  padding-left: 4px;
}

.tabl-obertka { position: relative; }

.peremestit {
  position: absolute;
  left: -13px;
  top: -12px;
  width: 12px;
  height: 12px;
  border: 1px solid #a8b0bc;
  box-sizing: border-box;
  background: #f3f5f9;
  display: flex;
}

.peremestit svg { width: 100%; height: 100%; }

.nakladnaya {
  width: 1423px;
  table-layout: fixed;
  border-collapse: collapse;
  font-size: 26.400px;
}

.c1 { width: 711px; }
.c2 { width: 468px; }
.c3 { width: 244px; }

.nakladnaya td {
  border: 1px solid #000;
  padding: 1px 0 0;
  text-align: center;
  line-height: 29px;
  vertical-align: top;
}

.h32 td { height: 30px; }
.h31 td { height: 29px; }

.nakladnaya .sdvig {
  padding-left: 7px;
}

.nakladnaya .vlevo {
  text-align: left;
  padding-left: 11px;
}

.nakladnaya .yacheika {
  padding: 0 18px 0 23px;
}

.nakladnaya .pravaya {
  padding: 0 21px 0 22px;
}

.nakladnaya .niz {
  height: 100px;
}

.pole-vvoda {
  display: flex;
  flex-direction: column;
  justify-content: flex-end;
  border-bottom: 1px solid #000;
  box-sizing: border-box;
  line-height: 29.500px;
}

.p119 { height: 119px; }
.p120 { height: 120px; }

.p31 {
  display: block;
  height: 31px;
  padding-top: 1px;
  line-height: 29px;
  white-space: nowrap;
}

.melko {
  font-size: 17.400px;
  line-height: 19.500px;
  padding-top: 1px;
  white-space: nowrap;
}

.volna {
  text-decoration: underline wavy #3aa33a 1px;
  text-underline-offset: 2px;
}
</style>

<style>
html, body {
  margin: 0;
  overflow: hidden;
}
</style>
